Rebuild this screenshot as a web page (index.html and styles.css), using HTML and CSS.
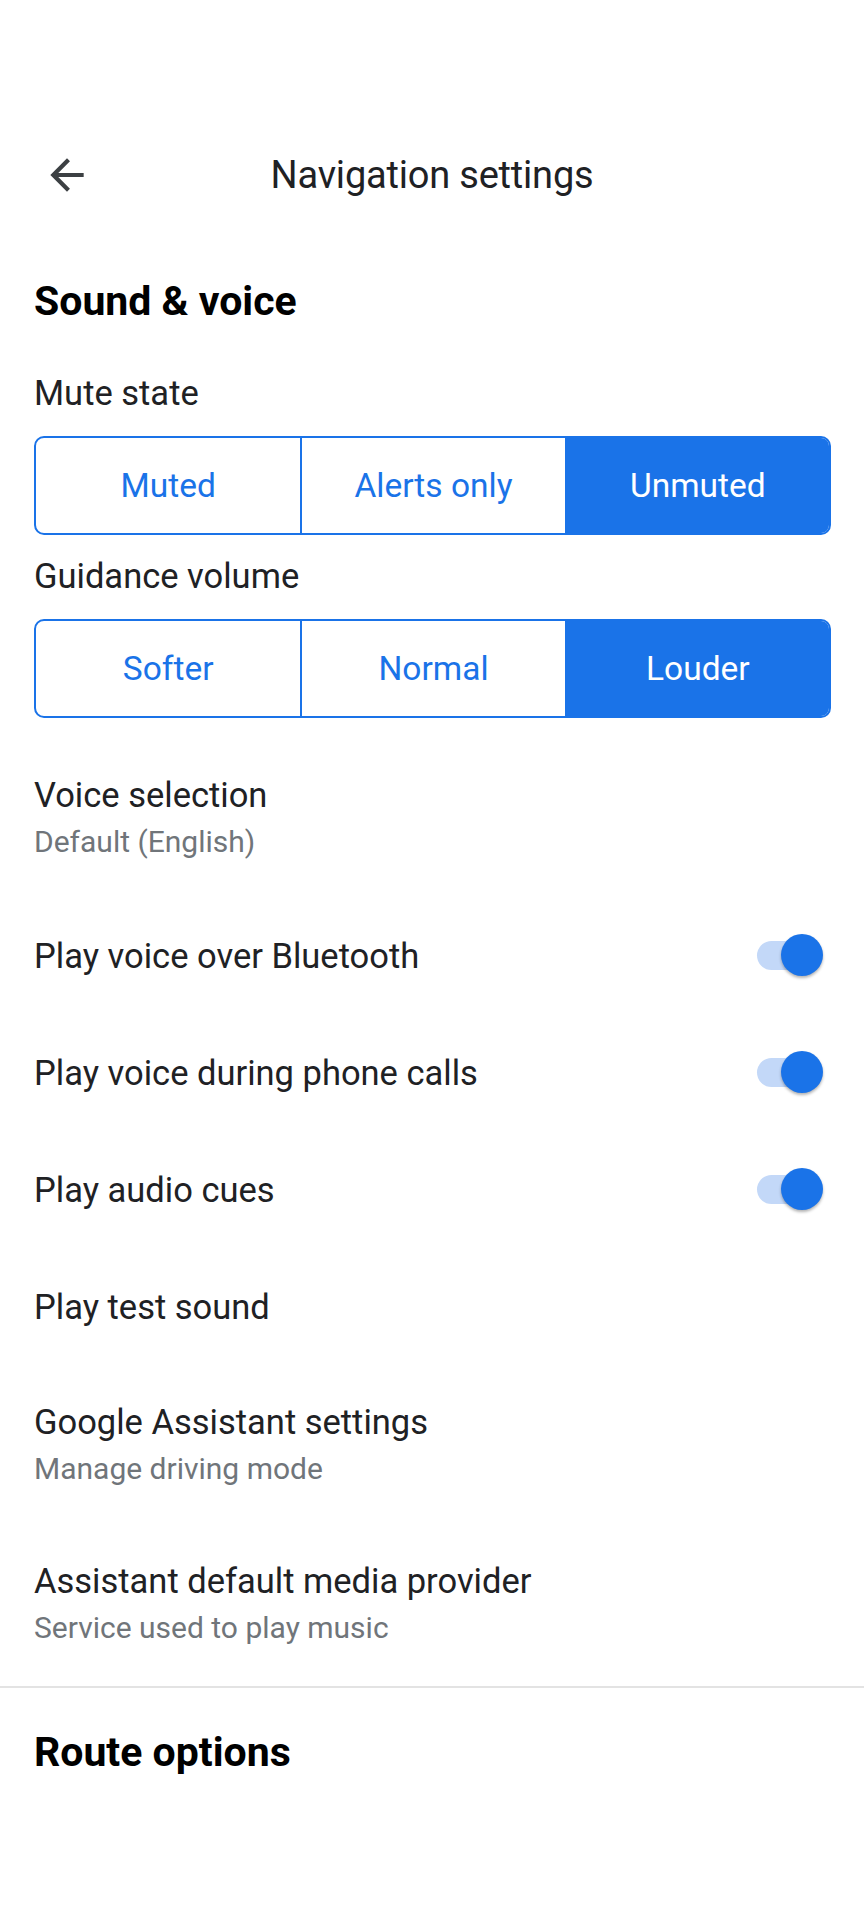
FILE: index.html
```html
<!DOCTYPE html>
<html>

<head>
  <title>Navigation settings</title>
  <meta charset="utf-8" />
  <meta name="viewport" content="width=device-width, initial-scale=1.0" />
  <link rel="stylesheet" href="styles.css">
</head>

<body>
  <header class="toolbar">
    <button class="back" aria-label="Back">
      <svg viewBox="0 0 24 24" width="50" height="50">
        <path d="M20 11H7.83l5.59-5.59L12 4l-8 8 8 8 1.41-1.41L7.83 13H20v-2z" fill="#3c4043" />
      </svg>
    </button>
    <h1 class="title">Navigation settings</h1>
  </header>

  <section class="section">
    <h2 class="section-title">Sound &amp; voice</h2>

    <div class="label">Mute state</div>
    <div class="segmented">
      <div class="segment">Muted</div>
      <div class="segment">Alerts only</div>
      <div class="segment selected">Unmuted</div>
    </div>

    <div class="label label-second">Guidance volume</div>
    <div class="segmented">
      <div class="segment">Softer</div>
      <div class="segment">Normal</div>
      <div class="segment selected">Louder</div>
    </div>

    <ul class="list">
      <li class="item two-line">
        <div class="item-title">Voice selection</div>
        <div class="item-sub">Default (English)</div>
      </li>
      <li class="item">
        <div class="item-title">Play voice over Bluetooth</div>
        <div class="switch"><span class="thumb"></span></div>
      </li>
      <li class="item">
        <div class="item-title">Play voice during phone calls</div>
        <div class="switch"><span class="thumb"></span></div>
      </li>
      <li class="item">
        <div class="item-title">Play audio cues</div>
        <div class="switch"><span class="thumb"></span></div>
      </li>
      <li class="item">
        <div class="item-title">Play test sound</div>
      </li>
      <li class="item two-line">
        <div class="item-title">Google Assistant settings</div>
        <div class="item-sub">Manage driving mode</div>
      </li>
      <li class="item two-line">
        <div class="item-title">Assistant default media provider</div>
        <div class="item-sub">Service used to play music</div>
      </li>
    </ul>
  </section>

  <hr class="divider">

  <section class="section">
    <h2 class="section-title route">Route options</h2>
  </section>
</body>

</html>
```

FILE: styles.css
```css
body {
  margin: 0;
  width: 864px;
  min-height: 1920px;
  background: #ffffff;
  font-family: Roboto, "Noto Sans", sans-serif;
  color: #202124;
}

.toolbar {
  display: flex;
  align-items: center;
  justify-content: center;
  position: relative;
  height: 100px;
  margin-top: 125px;
}

.back {
  position: absolute;
  left: 42px;
  top: 25px;
  width: 50px;
  height: 50px;
  padding: 0;
  border: none;
  background: none;
}

.back svg {
  display: block;
}

.title {
  margin: 0;
  font-size: 38px;
  font-weight: 400;
  color: #202124;
  letter-spacing: -0.2px;
}

.section {
  padding: 0 33px 0 34px;
}

.section-title {
  margin: 51px 0 0;
  font-size: 41px;
  line-height: 50px;
  font-weight: 700;
  color: #000000;
}

.route {
  margin-top: 39px;
}

.label {
  margin-top: 45px;
  font-size: 34.5px;
  line-height: 44px;
  color: #202124;
}

.label-second {
  margin-top: 19px;
}

.segmented {
  display: grid;
  grid-template-columns: 1fr 1fr 1fr;
  height: 99px;
  margin-top: 21px;
  border: 2px solid #1a73e8;
  border-radius: 10px;
  overflow: hidden;
  box-sizing: border-box;
}

.segment {
  display: flex;
  align-items: center;
  justify-content: center;
  font-size: 33.5px;
  color: #1a73e8;
}

.segment + .segment {
  border-left: 2px solid #1a73e8;
}

.segment.selected {
  background: #1a73e8;
  color: #ffffff;
}

.list {
  list-style: none;
  margin: 20px 0 0;
  padding: 0;
}

.item {
  display: flex;
  align-items: center;
  justify-content: space-between;
  height: 117px;
}

.item.two-line {
  flex-direction: column;
  align-items: flex-start;
  justify-content: center;
  height: 159px;
}

.item-title {
  font-size: 34.5px;
  line-height: 44px;
  color: #202124;
}

.item-sub {
  margin-top: 5px;
  font-size: 30px;
  line-height: 40px;
  color: #70757a;
}

.switch {
  position: relative;
  width: 62px;
  height: 29px;
  margin-right: 12px;
  border-radius: 15px;
  background: #c3d8f8;
}

.thumb {
  position: absolute;
  left: 24px;
  top: -7px;
  width: 42px;
  height: 42px;
  border-radius: 50%;
  background: #1a73e8;
  box-shadow: 0 2px 3px rgba(0, 0, 0, 0.3);
}

.divider {
  margin: 3px 0 0;
  border: none;
  height: 2px;
  background: #e3e3e3;
}
```
